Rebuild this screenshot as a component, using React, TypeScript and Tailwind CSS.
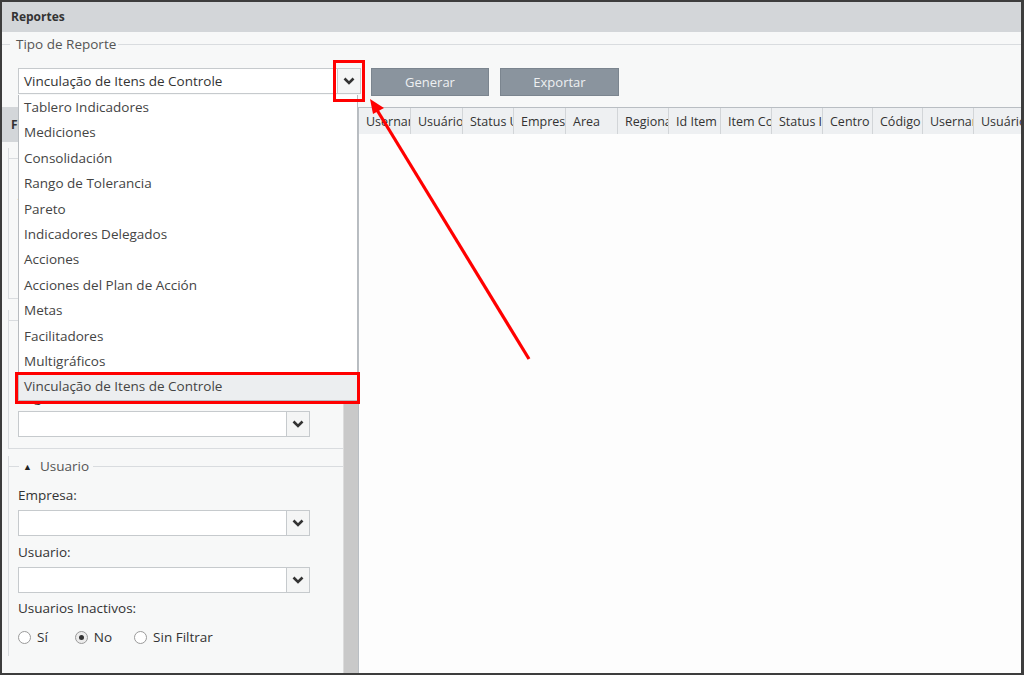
import React from 'react';

const FONT = "font-['Open_Sans','Noto_Sans',sans-serif]";

const reportTypes = [
  'Tablero Indicadores',
  'Mediciones',
  'Consolidación',
  'Rango de Tolerancia',
  'Pareto',
  'Indicadores Delegados',
  'Acciones',
  'Acciones del Plan de Acción',
  'Metas',
  'Facilitadores',
  'Multigráficos',
  'Vinculação de Itens de Controle',
];

const columns = [
  { label: 'Username', w: 'w-[52px]' },
  { label: 'Usuário', w: 'w-[52px]' },
  { label: 'Status Usuário', w: 'w-[51px]' },
  { label: 'Empresa', w: 'w-[52px]' },
  { label: 'Area', w: 'w-[52px]' },
  { label: 'Regional', w: 'w-[51px]' },
  { label: 'Id Item', w: 'w-[52px]' },
  { label: 'Item Controle', w: 'w-[51px]' },
  { label: 'Status Item', w: 'w-[51px]' },
  { label: 'Centro', w: 'w-[50px]' },
  { label: 'Código', w: 'w-[50px]' },
  { label: 'Username', w: 'w-[51px]' },
  { label: 'Usuário', w: 'w-[60px]' },
];

// Small bold chevron used by every combo box
const Chevron = () => (
  <svg width="12" height="8" viewBox="0 0 12 8">
    <polyline points="1.5,1.5 6,6 10.5,1.5" fill="none" stroke="#333" strokeWidth="2.6" />
  </svg>
);

const Combo = ({ value = '', className = '' }: { value?: string; className?: string }) => (
  <div className={`flex h-[26px] border border-[#c6cacd] bg-white ${className}`}>
    <div className="flex-1 truncate pl-[5px] text-[13.5px] leading-[24px] text-[#333]">{value}</div>
    <div className="flex w-[23px] items-center justify-center border-l border-[#c6cacd] bg-[#f4f5f5]">
      <Chevron />
    </div>
  </div>
);

// Fieldset-like group with a line on top and left
const Group = ({ legend, children, className = '' }: { legend: React.ReactNode; children: React.ReactNode; className?: string }) => (
  <div className={`ml-[6px] border-l border-b border-[#d9dcdf] ${className}`}>
    <div className="flex items-center">
      <div className="h-px w-[10px] bg-[#d9dcdf]" />
      <div className="px-[4px] text-[13.5px] text-[#555]">{legend}</div>
      <div className="h-px flex-1 bg-[#d9dcdf]" />
    </div>
    <div className="pl-[9px] pr-[32px]">{children}</div>
  </div>
);

const Radio = ({ label, checked }: { label: string; checked?: boolean }) => (
  <label className="flex items-center gap-[6px] text-[13.5px] text-[#333]">
    <span className={`flex h-[13px] w-[13px] items-center justify-center rounded-full border border-[#9a9a9a] ${checked ? 'bg-[#ececec]' : 'bg-white'}`}>
      {checked && <span className="h-[5px] w-[5px] rounded-full bg-[#333]" />}
    </span>
    {label}
  </label>
);

export default function App() {
  return (
    <div className={`relative flex h-[675px] w-[1024px] flex-col overflow-hidden border-2 border-r-[3px] border-[#3d3d3d] bg-[#f7f8f8] ${FONT}`}>
      {/* title bar */}
      <div className="flex h-[30px] shrink-0 items-center bg-[#d3d6d9] pl-[9px] text-[12px] font-bold text-[#333]">Reportes</div>

      {/* tipo de reporte */}
      <div className="mt-[2px] flex items-center">
        <div className="h-px w-[8px] bg-[#d9dcdf]" />
        <div className="ml-[4px] px-[2px] text-[13.5px] text-[#555]">Tipo de Reporte</div>
        <div className="h-px flex-1 bg-[#d9dcdf]" />
      </div>
      <div className="mt-[14px] flex items-start pl-[16px]">
        <Combo value="Vinculação de Itens de Controle" className="w-[343px]" />
        <button className="ml-[10px] h-[28px] w-[118px] border border-[#7b858f] bg-[#8a949e] text-[13px] text-[#eef0f2]">Generar</button>
        <button className="ml-[11px] h-[28px] w-[119px] border border-[#7b858f] bg-[#8a949e] text-[13px] text-[#eef0f2]">Exportar</button>
      </div>

      {/* body */}
      <div className="mt-[11px] flex min-h-0 flex-1">
        {/* filters panel */}
        <div className="flex w-[341px] flex-col">
          <div className="flex h-[35px] items-center bg-[#d3d6d9] pl-[9px] text-[12px] font-bold text-[#333]">Filtros</div>
          <div className="flex flex-col pt-[6px]">
            <Group legend="▲ Indicador" className="h-[151px]">
              <div className="mt-[16px] text-[13.5px] text-[#333]">Área:</div>
              <Combo className="mt-[4px] w-[292px]" />
              <div className="mt-[8px] text-[13.5px] text-[#6a2ea0]">Indicador:</div>
              <Combo className="mt-[4px] w-[292px]" />
            </Group>
            <Group legend="▲ Estructura" className="mt-[11px] h-[139px]">
              <div className="mt-[1px] text-[13.5px] text-[#333]">Gerencia:</div>
              <Combo className="mt-[4px] w-[292px]" />
              <div className="mt-[5px] text-[13.5px] text-[#333]">Regional:</div>
              <Combo className="mt-[4px] w-[292px]" />
            </Group>
            <Group
              legend={<span className="flex items-center gap-[8px]"><span className="text-[9px] text-[#222]">▲</span>Usuario</span>}
              className="mt-[7px] h-[200px] border-b-0"
            >
              <div className="mt-[8px] text-[13.5px] text-[#333]">Empresa:</div>
              <Combo className="mt-[5px] w-[292px]" />
              <div className="mt-[6px] text-[13.5px] text-[#333]">Usuario:</div>
              <Combo className="mt-[5px] w-[292px]" />
              <div className="mt-[5px] text-[13.5px] text-[#333]">Usuarios Inactivos:</div>
              <div className="mt-[9px] flex items-center">
                <Radio label="Sí" />
                <div className="ml-[27px]"><Radio label="No" checked /></div>
                <div className="ml-[22px]"><Radio label="Sin Filtrar" /></div>
              </div>
            </Group>
          </div>
        </div>
        {/* scrollbar */}
        <div className="w-[15px] border-l border-[#dcdcdc] bg-[#c9c9c9]" />

        {/* results grid */}
        <div className="flex min-w-0 flex-1 flex-col border-l border-t border-[#b9bec3] bg-[#fdfdfd]">
          <div className="flex h-[26px] bg-[#eef0f2]">
            {columns.map((c, i) => (
              <div key={i} className={`${c.w} shrink-0 overflow-hidden whitespace-nowrap border-r border-[#d2d5d8] pl-[7px] text-[12.5px] leading-[28px] text-[#333]`}>
                {c.label}
              </div>
            ))}
          </div>
        </div>
      </div>

      {/* open dropdown list */}
      <div className="absolute left-[16px] top-[93px] w-[340px] border border-t-0 border-[#b8bcc0] bg-white">
        {reportTypes.map((t, i) => (
          <div
            key={t}
            className={`h-[25.4px] pl-[5px] text-[13.5px] leading-[25px] text-[#444] ${i === reportTypes.length - 1 ? 'bg-[#eceef0]' : ''}`}
          >
            {t}
          </div>
        ))}
      </div>

      {/* annotations */}
      <div className="absolute left-[331px] top-[58px] h-[42px] w-[32px] border-[3px] border-[#ff0000]" />
      <div className="absolute left-[13px] top-[370px] h-[32px] w-[345px] border-[3px] border-[#ff0000]" />
      <svg className="absolute left-0 top-0" width="1024" height="675">
        <line x1="527" y1="357" x2="375" y2="108" stroke="#ff0000" strokeWidth="3.2" />
        <polygon points="368,97 382,106 371,112" fill="#ff0000" />
      </svg>
    </div>
  );
}
